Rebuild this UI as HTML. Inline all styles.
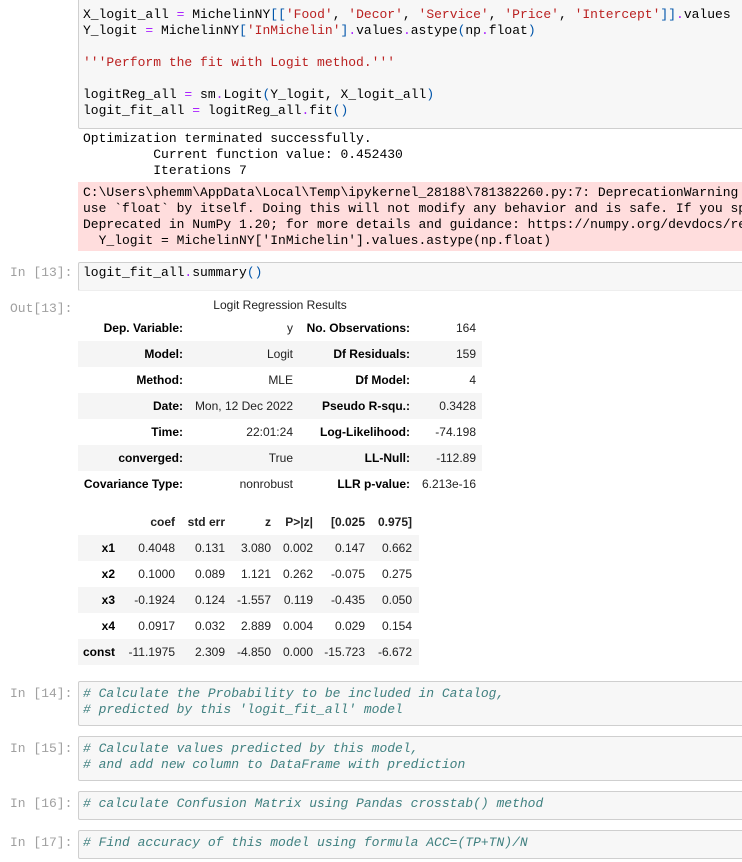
<!DOCTYPE html>
<html><head><style>
html,body{margin:0;padding:0;width:742px;height:862px;overflow:hidden;}
body{background:#fff;font-family:"Liberation Mono",monospace;font-size:13px;}
#w{position:relative;width:742px;height:862px;overflow:hidden;}
.a{position:absolute;}
.cell{position:absolute;left:78px;width:670px;background:#f7f7f7;border:1px solid #cfcfcf;border-radius:2px;}
.ln{position:absolute;left:83px;white-space:pre;line-height:16px;color:#000;}
.p{position:absolute;left:10px;color:#a0a0a0;white-space:pre;line-height:16px;}
.s{color:#ba2121}.o{color:#aa22ff}.b{color:#0055aa}
.c{color:#408080;font-style:italic}
.t{position:absolute;font-family:"Liberation Sans",sans-serif;font-size:12px;white-space:nowrap;line-height:26px;color:#222;}
.bd{font-weight:bold;color:#000}
.r{position:absolute;left:78px;height:26px;background:#f5f5f5;}
</style></head><body><div id="w">
<div class="cell" style="top:-2px;height:129px"></div>
<div class="ln" style="top:7px">X_logit_all <span class="o">=</span> MichelinNY<span class="b">[[</span><span class="s">'Food'</span>, <span class="s">'Decor'</span>, <span class="s">'Service'</span>, <span class="s">'Price'</span>, <span class="s">'Intercept'</span><span class="b">]]</span><span class="o">.</span>values</div>
<div class="ln" style="top:23px">Y_logit <span class="o">=</span> MichelinNY<span class="b">[</span><span class="s">'InMichelin'</span><span class="b">]</span><span class="o">.</span>values<span class="o">.</span>astype<span class="b">(</span>np<span class="o">.</span>float<span class="b">)</span></div>
<div class="ln s" style="top:55px">'''Perform the fit with Logit method.'''</div>
<div class="ln" style="top:87px">logitReg_all <span class="o">=</span> sm<span class="o">.</span>Logit<span class="b">(</span>Y_logit, X_logit_all<span class="b">)</span></div>
<div class="ln" style="top:103px">logit_fit_all <span class="o">=</span> logitReg_all<span class="o">.</span>fit<span class="b">()</span></div>
<div class="ln" style="top:131px">Optimization terminated successfully.
         Current function value: 0.452430
         Iterations 7</div>
<div class="a" style="left:78px;width:664px;top:182px;height:69px;background:#fdd"></div>
<div class="ln" style="top:185px">C:\Users\phemm\AppData\Local\Temp\ipykernel_28188\781382260.py:7: DeprecationWarning
use `float` by itself. Doing this will not modify any behavior and is safe. If you sp
Deprecated in NumPy 1.20; for more details and guidance: https://numpy.org/devdocs/re
  Y_logit = MichelinNY['InMichelin'].values.astype(np.float)</div>
<div class="p" style="top:265px">In [13]:</div>
<div class="cell" style="top:262px;height:27px"></div>
<div class="ln" style="top:265px">logit_fit_all<span class="o">.</span>summary<span class="b">()</span></div>
<div class="p" style="top:301px">Out[13]:</div>
<div class="a" style="left:78px;width:664px;top:290px;height:1px;background:#eee"></div>
<div class="t" style="left:78px;width:404px;text-align:center;top:292px">Logit Regression Results</div>
<div class="r" style="top:341px;width:404px"></div>
<div class="r" style="top:393px;width:404px"></div>
<div class="r" style="top:445px;width:404px"></div>
<div class="t bd" style="right:559px;top:315px;text-align:right">Dep. Variable:<br>Model:<br>Method:<br>Date:<br>Time:<br>converged:<br>Covariance Type:</div>
<div class="t" style="right:449px;top:315px;text-align:right">y<br>Logit<br>MLE<br>Mon, 12 Dec 2022<br>22:01:24<br>True<br>nonrobust</div>
<div class="t bd" style="right:332px;top:315px;text-align:right">No. Observations:<br>Df Residuals:<br>Df Model:<br>Pseudo R-squ.:<br>Log-Likelihood:<br>LL-Null:<br>LLR p-value:</div>
<div class="t" style="right:266px;top:315px;text-align:right">164<br>159<br>4<br>0.3428<br>-74.198<br>-112.89<br>6.213e-16</div>
<div class="r" style="top:535px;width:341px"></div>
<div class="r" style="top:587px;width:341px"></div>
<div class="r" style="top:639px;width:341px"></div>
<div class="t bd" style="right:627px;top:535px;text-align:right">x1<br>x2<br>x3<br>x4<br>const</div>
<div class="t" style="right:567px;top:509px;text-align:right"><b>coef</b><br>0.4048<br>0.1000<br>-0.1924<br>0.0917<br>-11.1975</div>
<div class="t" style="right:517px;top:509px;text-align:right"><b>std err</b><br>0.131<br>0.089<br>0.124<br>0.032<br>2.309</div>
<div class="t" style="right:471px;top:509px;text-align:right"><b>z</b><br>3.080<br>1.121<br>-1.557<br>2.889<br>-4.850</div>
<div class="t" style="right:429px;top:509px;text-align:right"><b>P&gt;|z|</b><br>0.002<br>0.262<br>0.119<br>0.004<br>0.000</div>
<div class="t" style="right:377px;top:509px;text-align:right"><b>[0.025</b><br>0.147<br>-0.075<br>-0.435<br>0.029<br>-15.723</div>
<div class="t" style="right:330px;top:509px;text-align:right"><b>0.975]</b><br>0.662<br>0.275<br>0.050<br>0.154<br>-6.672</div>
<div class="p" style="top:686px">In [14]:</div>
<div class="cell" style="top:681px;height:43px"></div>
<div class="ln c" style="top:686px"># Calculate the Probability to be included in Catalog,
# predicted by this 'logit_fit_all' model</div>
<div class="p" style="top:741px">In [15]:</div>
<div class="cell" style="top:736px;height:43px"></div>
<div class="ln c" style="top:741px"># Calculate values predicted by this model,
# and add new column to DataFrame with prediction</div>
<div class="p" style="top:796px">In [16]:</div>
<div class="cell" style="top:791px;height:27px"></div>
<div class="ln c" style="top:796px"># calculate Confusion Matrix using Pandas crosstab() method</div>
<div class="p" style="top:835px">In [17]:</div>
<div class="cell" style="top:830px;height:27px"></div>
<div class="ln c" style="top:835px"># Find accuracy of this model using formula ACC=(TP+TN)/N</div>
</div></body></html>
